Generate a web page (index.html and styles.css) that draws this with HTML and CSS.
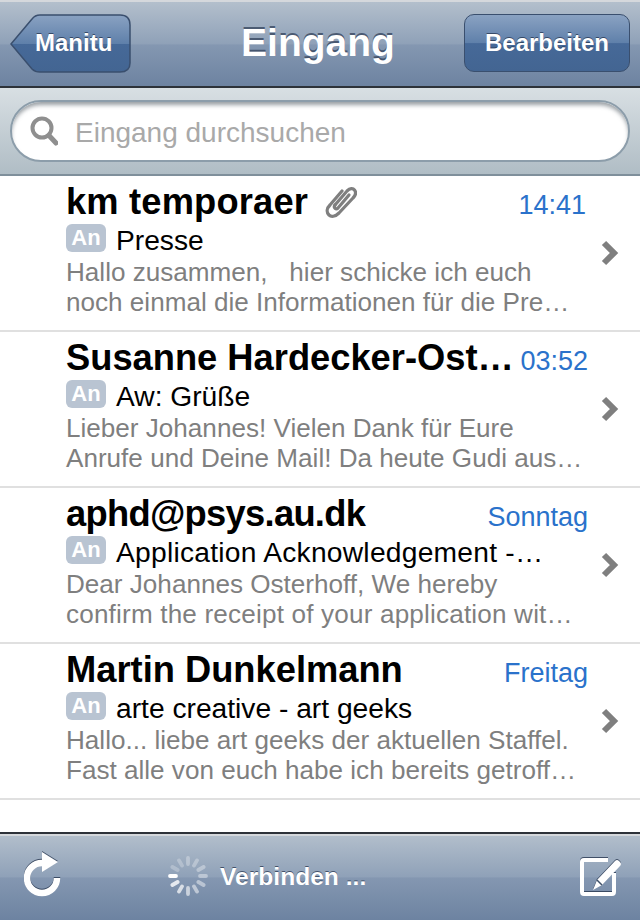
FILE: index.html
```html
<!DOCTYPE html>
<html lang="de">
<head>
    <meta charset="UTF-8">
    <meta name="viewport" content="width=device-width, initial-scale=1.0">
    <title>Eingang</title>
    <link rel="stylesheet" href="styles.css">
</head>
<body>
    <div class="page">
        <header class="navbar">
            <button class="back-button">
                <svg class="back-shape" width="122" height="60" viewBox="0 0 122 60">
                    <defs>
                        <linearGradient id="backFill" x1="0" y1="0" x2="0" y2="1">
                            <stop offset="0" stop-color="#8aa2c2"/>
                            <stop offset="0.5" stop-color="#5f80aa"/>
                            <stop offset="0.51" stop-color="#466998"/>
                            <stop offset="1" stop-color="#436592"/>
                        </linearGradient>
                    </defs>
                    <path d="M1 30 L22 5 Q25 1 30 1 H110 Q120 1 120 11 V49 Q120 58 110 58 H30 Q25 58 22 55 Z" fill="url(#backFill)" stroke="#3a4f6e" stroke-width="1.5"/>
                </svg>
                <span class="back-label">Manitu</span>
            </button>
            <h1 class="nav-title">Eingang</h1>
            <button class="nav-button">Bearbeiten</button>
        </header>

        <div class="searchbar">
            <div class="search-field">
                <svg class="search-icon" width="28" height="30" viewBox="0 0 28 30">
                    <circle cx="12" cy="12" r="9.5" fill="none" stroke="#8f8f8f" stroke-width="4"/>
                    <path d="M19 19.5 L26 27" stroke="#8f8f8f" stroke-width="5" stroke-linecap="round"/>
                </svg>
                <span class="search-placeholder">Eingang durchsuchen</span>
            </div>
        </div>

        <main class="mail-list">
            <div class="mail-row">
                <div class="mail-content">
                    <div class="mail-head">
                        <span class="sender sender-wide">km temporaer</span>
                        <svg class="clip" width="32" height="34" viewBox="0 0 32 34">
                            <path d="M10 20 L22 6 C25 3 28 3 29.5 5 C31 7 31 10 28 13 L14 28 C10 32 6 32 4 30 C1 27 2 23 5 20 L17 6" fill="none" stroke="#7f7f7f" stroke-width="3.2" stroke-linecap="round"/>
                            <path d="M10 20 C8 23 11 25 13 23 L24 10" fill="none" stroke="#7f7f7f" stroke-width="3.2" stroke-linecap="round"/>
                        </svg>
                        <span class="time time-first">14:41</span>
                    </div>
                    <div class="mail-subject"><span class="badge">An</span><span>Presse</span></div>
                    <div class="preview">Hallo zusammen, &nbsp; hier schicke ich euch</div>
                    <div class="preview">noch einmal die Informationen für die Pre…</div>
                </div>
                <svg class="chevron" width="20" height="28" viewBox="0 0 20 28"><path d="M4 4 L14 14 L4 24" fill="none" stroke="#7f7f7f" stroke-width="6"/></svg>
            </div>
            <div class="mail-row">
                <div class="mail-content">
                    <div class="mail-head">
                        <span class="sender">Susanne Hardecker-Ost…</span>
                        <span class="time">03:52</span>
                    </div>
                    <div class="mail-subject"><span class="badge">An</span><span>Aw: Grüße</span></div>
                    <div class="preview">Lieber Johannes! Vielen Dank für Eure</div>
                    <div class="preview">Anrufe und Deine Mail! Da heute Gudi aus…</div>
                </div>
                <svg class="chevron" width="20" height="28" viewBox="0 0 20 28"><path d="M4 4 L14 14 L4 24" fill="none" stroke="#7f7f7f" stroke-width="6"/></svg>
            </div>
            <div class="mail-row">
                <div class="mail-content">
                    <div class="mail-head">
                        <span class="sender sender-tight">aphd@psys.au.dk</span>
                        <span class="time">Sonntag</span>
                    </div>
                    <div class="mail-subject"><span class="badge">An</span><span class="subject-wide">Application Acknowledgement -…</span></div>
                    <div class="preview">Dear Johannes Osterhoff, We hereby</div>
                    <div class="preview preview-wide">confirm the receipt of your application wit…</div>
                </div>
                <svg class="chevron" width="20" height="28" viewBox="0 0 20 28"><path d="M4 4 L14 14 L4 24" fill="none" stroke="#7f7f7f" stroke-width="6"/></svg>
            </div>
            <div class="mail-row">
                <div class="mail-content">
                    <div class="mail-head">
                        <span class="sender">Martin Dunkelmann</span>
                        <span class="time">Freitag</span>
                    </div>
                    <div class="mail-subject"><span class="badge">An</span><span>arte creative - art geeks</span></div>
                    <div class="preview">Hallo... liebe art geeks der aktuellen Staffel.</div>
                    <div class="preview">Fast alle von euch habe ich bereits getroff…</div>
                </div>
                <svg class="chevron" width="20" height="28" viewBox="0 0 20 28"><path d="M4 4 L14 14 L4 24" fill="none" stroke="#7f7f7f" stroke-width="6"/></svg>
            </div>
        </main>

        <footer class="toolbar">
            <svg class="refresh-icon" width="38" height="46" viewBox="0 0 38 46">
                <path d="M33 26 A15 15 0 1 1 18 11" fill="none" stroke="#fff" stroke-width="6.5"/>
                <path d="M18 0 L34 10 L18 20 Z" fill="#fff"/>
            </svg>
            <div class="status">
                <svg class="spinner" width="40" height="40" viewBox="-20 -20 40 40">
                    <g stroke="#fff" stroke-width="3.8" stroke-linecap="round">
                        <line x1="-18" y1="0" x2="-12" y2="0" opacity="1"/>
                        <line x1="-15.6" y1="9" x2="-10.4" y2="6" opacity="0.8"/>
                        <line x1="-9" y1="15.6" x2="-6" y2="10.4" opacity="0.7"/>
                        <line x1="0" y1="18" x2="0" y2="12" opacity="0.6"/>
                        <line x1="9" y1="15.6" x2="6" y2="10.4" opacity="0.5"/>
                        <line x1="15.6" y1="9" x2="10.4" y2="6" opacity="0.45"/>
                        <line x1="18" y1="0" x2="12" y2="0" opacity="0.4"/>
                        <line x1="15.6" y1="-9" x2="10.4" y2="-6" opacity="0.35"/>
                        <line x1="9" y1="-15.6" x2="6" y2="-10.4" opacity="0.3"/>
                        <line x1="0" y1="-18" x2="0" y2="-12" opacity="0.3"/>
                        <line x1="-9" y1="-15.6" x2="-6" y2="-10.4" opacity="0.25"/>
                        <line x1="-15.6" y1="-9" x2="-10.4" y2="-6" opacity="0.25"/>
                    </g>
                </svg>
                <span class="status-text">Verbinden ...</span>
            </div>
            <svg class="compose-icon" width="46" height="40" viewBox="0 0 46 40">
                <path d="M30 3 H6 Q4 3 4 5 V35 Q4 37 6 37 H34 Q36 37 36 35 V16" fill="none" stroke="#fff" stroke-width="4"/>
                <path d="M15 33 L19 23 L37 4 Q39 2 41 4 L42 5 Q44 7 42 9 L24 28 Z" fill="#fff"/>
                <path d="M19 23 L24 28" stroke="#3f5068" stroke-width="1.5"/>
            </svg>
        </footer>
    </div>
</body>
</html>
```

FILE: styles.css
```css
body {
    margin: 0;
    font-family: "Liberation Sans", Arial, sans-serif;
    background-color: #fff;
}

.page {
    height: 920px;
    display: flex;
    flex-direction: column;
    overflow: hidden;
}

/* barra de cima */
.navbar {
    height: 82px;
    flex: none;
    display: flex;
    align-items: center;
    justify-content: space-between;
    padding: 0 10px 2px;
    border-top: 2px solid #d5d8dc;
    border-bottom: 2px solid #2d3239;
    background: linear-gradient(#b3bfcc 0%, #8fa1b8 50%, #8497b1 51%, #6d83a1 100%);
}

.back-button {
    position: relative;
    width: 120px;
    height: 58px;
    padding: 0 0 0 25px;
    text-align: left;
    background: none;
    border: none;
    font-family: inherit;
}

.back-shape {
    position: absolute;
    left: 0;
    top: 0;
}

.back-label {
    position: relative;
    font-size: 24px;
    font-weight: bold;
    color: #fff;
    text-shadow: 0 -1px 0 rgba(30, 45, 70, 0.7);
}

.nav-title {
    margin: 0 0 0 42px;
    font-size: 39px;
    font-weight: bold;
    color: #fff;
    text-shadow: 0 -2px 0 rgba(50, 65, 90, 0.75);
}

.nav-button {
    width: 166px;
    height: 58px;
    padding: 0;
    font-family: inherit;
    font-size: 24px;
    font-weight: bold;
    color: #fff;
    text-shadow: 0 -1px 0 rgba(30, 45, 70, 0.7);
    border: 1px solid #3a4f6e;
    border-radius: 10px;
    background: linear-gradient(#8aa2c2 0%, #5f80aa 50%, #466998 51%, #436592 100%);
}

/* busca */
.searchbar {
    height: 88px;
    flex: none;
    display: flex;
    align-items: center;
    padding: 0 10px;
    box-sizing: border-box;
    border-bottom: 2px solid #7f8f9b;
    background: linear-gradient(#d8dfe3, #b0bdc5);
}

.search-field {
    flex: 1;
    height: 62px;
    display: flex;
    align-items: center;
    gap: 17px;
    padding-left: 18px;
    box-sizing: border-box;
    background-color: #fff;
    border: 2px solid #8c9daa;
    border-radius: 31px;
    box-shadow: inset 0 4px 4px -1px rgba(70, 80, 90, 0.55);
}

.search-icon {
    flex: none;
}

.search-placeholder {
    margin-top: 4px;
    font-size: 28px;
    color: #a9a9a9;
}

/* lista */
.mail-list {
    flex: 1;
}

.mail-row {
    height: 156px;
    box-sizing: border-box;
    display: flex;
    align-items: center;
    padding: 0 20px 0 66px;
    border-bottom: 2px solid #e0e0e0;
}

.mail-content {
    flex: 1;
    min-width: 0;
    align-self: flex-start;
    padding-top: 7px;
    margin-right: 12px;
    white-space: nowrap;
}

.mail-head {
    display: flex;
    align-items: center;
    height: 38px;
}

.sender {
    font-size: 36.3px;
    font-weight: bold;
    color: #000;
}

.sender-wide {
    letter-spacing: 0.17px;
}

.sender-tight {
    letter-spacing: -0.7px;
}

.clip {
    margin-left: 17px;
}

.time {
    margin-left: auto;
    margin-top: 6px;
    font-size: 27px;
    color: #2a72cb;
}

.time-first {
    margin-right: 2px;
}

.mail-subject {
    display: flex;
    align-items: center;
    gap: 10px;
    height: 30px;
    margin: 4px 0 2px;
    font-size: 28.2px;
    color: #000;
}

.subject-wide {
    letter-spacing: 0.25px;
}

.badge {
    width: 40px;
    height: 28px;
    margin-bottom: 4px;
    display: flex;
    align-items: center;
    justify-content: center;
    font-size: 22px;
    font-weight: bold;
    color: #fff;
    background-color: #b9c4d2;
    border-radius: 6px;
}

.preview {
    height: 30px;
    line-height: 30px;
    font-size: 26.1px;
    color: #7f7f7f;
}

.preview-wide {
    letter-spacing: 0.18px;
}

.chevron {
    flex: none;
}

/* barra de baixo */
.toolbar {
    height: 86px;
    flex: none;
    display: flex;
    align-items: center;
    padding: 0 16px 0 24px;
    border-top: 2px solid #2d3239;
    box-shadow: inset 0 2px 0 #d5d8dc;
    background: linear-gradient(#b3bfcc 0%, #8fa1b8 50%, #8497b1 51%, #6d83a1 100%);
}

.refresh-icon,
.compose-icon {
    filter: drop-shadow(0 -1px 0 rgba(40, 55, 80, 0.8));
}

.refresh-icon {
    margin-bottom: 4px;
}

.status {
    display: flex;
    align-items: center;
    gap: 12px;
    margin-left: 106px;
    margin-right: auto;
}

.spinner {
    margin-bottom: 2px;
}

.status-text {
    font-size: 24.6px;
    font-weight: bold;
    color: #fff;
    text-shadow: 0 -1px 0 rgba(30, 45, 70, 0.7);
}
```
